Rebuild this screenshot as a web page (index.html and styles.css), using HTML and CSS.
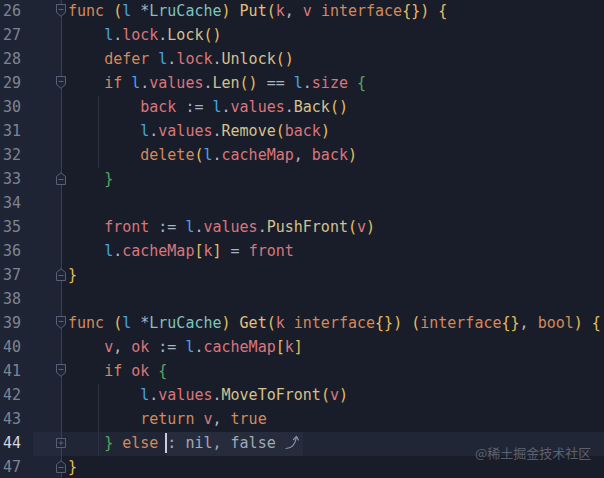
FILE: index.html
```html
<!DOCTYPE html>
<html>
<head>
<meta charset="utf-8">
<link rel="stylesheet" href="styles.css">
</head>
<body>
<div class="editor">
  <div class="row"><div class="gutter"><span class="ln">26</span><svg class="fold" viewBox="0 0 10 13"><path d="M0.5 0.5H9.5V8.5L5 12.3L0.5 8.5Z"/><line x1="2.5" y1="5.5" x2="7.5" y2="5.5"/></svg></div><div class="code"><span class="kw">func</span> <span class="by">(</span><span class="rc">l</span> <span class="op">*</span><span class="ty">LruCache</span><span class="by">)</span> <span class="fn">Put</span><span class="by">(</span><span class="pr">k</span><span class="pn">,</span> <span class="pr">v</span> <span class="kw">interface</span><span class="by">{}</span><span class="by">)</span> <span class="by">{</span></div></div>
  <div class="row"><div class="gutter"><span class="ln">27</span></div><div class="code">    <span class="rc">l</span><span class="pn">.</span><span class="fd">lock</span><span class="pn">.</span><span class="mc">Lock</span><span class="by">()</span></div></div>
  <div class="row"><div class="gutter"><span class="ln">28</span></div><div class="code">    <span class="kw">defer</span> <span class="rc">l</span><span class="pn">.</span><span class="fd">lock</span><span class="pn">.</span><span class="mc">Unlock</span><span class="by">()</span></div></div>
  <div class="row"><div class="gutter"><span class="ln">29</span><svg class="fold" viewBox="0 0 10 13"><path d="M0.5 0.5H9.5V8.5L5 12.3L0.5 8.5Z"/><line x1="2.5" y1="5.5" x2="7.5" y2="5.5"/></svg></div><div class="code">    <span class="kw">if</span> <span class="rc">l</span><span class="pn">.</span><span class="fd">values</span><span class="pn">.</span><span class="mc">Len</span><span class="by">()</span> <span class="op">==</span> <span class="rc">l</span><span class="pn">.</span><span class="fd">size</span> <span class="bg">{</span></div></div>
  <div class="row guide"><div class="gutter"><span class="ln">30</span></div><div class="code">        <span class="fd">back</span> <span class="op">:=</span> <span class="rc">l</span><span class="pn">.</span><span class="fd">values</span><span class="pn">.</span><span class="mc">Back</span><span class="by">()</span></div></div>
  <div class="row guide"><div class="gutter"><span class="ln">31</span></div><div class="code">        <span class="rc">l</span><span class="pn">.</span><span class="fd">values</span><span class="pn">.</span><span class="mc">Remove</span><span class="by">(</span><span class="fd">back</span><span class="by">)</span></div></div>
  <div class="row guide"><div class="gutter"><span class="ln">32</span></div><div class="code">        <span class="kw">delete</span><span class="by">(</span><span class="rc">l</span><span class="pn">.</span><span class="fd">cacheMap</span><span class="pn">,</span> <span class="fd">back</span><span class="by">)</span></div></div>
  <div class="row"><div class="gutter"><span class="ln">33</span><svg class="fold" viewBox="0 0 10 13"><path d="M0.5 12.5H9.5V4.5L5 0.7L0.5 4.5Z"/><line x1="2.5" y1="7.5" x2="7.5" y2="7.5"/></svg></div><div class="code">    <span class="bg">}</span></div></div>
  <div class="row"><div class="gutter"><span class="ln">34</span></div><div class="code"></div></div>
  <div class="row"><div class="gutter"><span class="ln">35</span></div><div class="code">    <span class="fd">front</span> <span class="op">:=</span> <span class="rc">l</span><span class="pn">.</span><span class="fd">values</span><span class="pn">.</span><span class="mc">PushFront</span><span class="by">(</span><span class="pr">v</span><span class="by">)</span></div></div>
  <div class="row"><div class="gutter"><span class="ln">36</span></div><div class="code">    <span class="rc">l</span><span class="pn">.</span><span class="fd">cacheMap</span><span class="by">[</span><span class="pr">k</span><span class="by">]</span> <span class="op">=</span> <span class="fd">front</span></div></div>
  <div class="row"><div class="gutter"><span class="ln">37</span><svg class="fold" viewBox="0 0 10 13"><path d="M0.5 12.5H9.5V4.5L5 0.7L0.5 4.5Z"/><line x1="2.5" y1="7.5" x2="7.5" y2="7.5"/></svg></div><div class="code"><span class="by">}</span></div></div>
  <div class="row"><div class="gutter"><span class="ln">38</span></div><div class="code"></div></div>
  <div class="row"><div class="gutter"><span class="ln">39</span><svg class="fold" viewBox="0 0 10 13"><path d="M0.5 0.5H9.5V8.5L5 12.3L0.5 8.5Z"/><line x1="2.5" y1="5.5" x2="7.5" y2="5.5"/></svg></div><div class="code"><span class="kw">func</span> <span class="by">(</span><span class="rc">l</span> <span class="op">*</span><span class="ty">LruCache</span><span class="by">)</span> <span class="fn">Get</span><span class="by">(</span><span class="pr">k</span> <span class="kw">interface</span><span class="by">{}</span><span class="by">)</span> <span class="by">(</span><span class="kw">interface</span><span class="by">{}</span><span class="pn">,</span> <span class="kw">bool</span><span class="by">)</span> <span class="by">{</span></div></div>
  <div class="row"><div class="gutter"><span class="ln">40</span></div><div class="code">    <span class="pr">v</span><span class="pn">,</span> <span class="fd">ok</span> <span class="op">:=</span> <span class="rc">l</span><span class="pn">.</span><span class="fd">cacheMap</span><span class="by">[</span><span class="pr">k</span><span class="by">]</span></div></div>
  <div class="row"><div class="gutter"><span class="ln">41</span><svg class="fold" viewBox="0 0 10 13"><path d="M0.5 0.5H9.5V8.5L5 12.3L0.5 8.5Z"/><line x1="2.5" y1="5.5" x2="7.5" y2="5.5"/></svg></div><div class="code">    <span class="kw">if</span> <span class="fd">ok</span> <span class="bg">{</span></div></div>
  <div class="row guide"><div class="gutter"><span class="ln">42</span></div><div class="code">        <span class="rc">l</span><span class="pn">.</span><span class="fd">values</span><span class="pn">.</span><span class="mc">MoveToFront</span><span class="by">(</span><span class="pr">v</span><span class="by">)</span></div></div>
  <div class="row guide"><div class="gutter"><span class="ln">43</span></div><div class="code">        <span class="kw">return</span> <span class="pr">v</span><span class="pn">,</span> <span class="kw">true</span></div></div>
  <div class="row current"><div class="gutter"><span class="ln">44</span><svg class="fold sq" viewBox="0 0 10 10"><path d="M0.5 0.5H9.5V9.5H0.5Z"/><line x1="2.5" y1="5" x2="7.5" y2="5"/><line x1="5" y1="2.5" x2="5" y2="7.5"/></svg></div><div class="code">    <span class="bg">}</span> <span class="kw">else</span> <span class="caret"></span><span class="placeholder">: nil, false <svg class="arrow" viewBox="0 0 14 16"><path d="M1 14.5C6 14.5 10 12 11.5 3"/><path d="M8.5 5.5L11.5 2.5L13.5 6"/></svg></span></div></div>
  <div class="row"><div class="gutter"><span class="ln">47</span><svg class="fold" viewBox="0 0 10 13"><path d="M0.5 12.5H9.5V4.5L5 0.7L0.5 4.5Z"/><line x1="2.5" y1="7.5" x2="7.5" y2="7.5"/></svg></div><div class="code"><span class="by">}</span></div></div>
  <div class="watermark">@稀土掘金技术社区</div>
</div>
</body>
</html>
```

FILE: styles.css
```css
html, body {
  margin: 0;
  padding: 0;
  background: #191d2a;
}
.editor {
  position: relative;
  width: 604px;
  height: 478px;
  overflow: hidden;
  background: #191d2a;
  font-family: "DejaVu Sans Mono", "Liberation Mono", monospace;
  font-size: 15px;
  color: #b4bccb;
}
.row {
  display: flex;
  height: 24px;
  line-height: 23px;
}
.gutter {
  position: relative;
  flex: 0 0 61px;
  width: 61px;
  background: #1e2434;
  border-right: 1px solid #35405c;
  box-sizing: content-box;
}
.ln {
  display: block;
  padding-left: 3px;
  color: #7d8494;
}
.code {
  flex: 1;
  padding-left: 6px;
  white-space: pre;
}
.fold {
  position: absolute;
  right: -5px;
  top: 4px;
  width: 10px;
  height: 13px;
  fill: #1e2434;
  stroke: #56617c;
  stroke-width: 1;
}
.fold.sq {
  top: 6px;
  height: 10px;
}
.guide .code {
  background: linear-gradient(#2c3244, #2c3244) no-repeat 36px 0 / 1px 100%;
}
.current .gutter {
  background: linear-gradient(to right, #1e2434 33px, #242a3b 33px);
}
.current .ln {
  color: #d3d7df;
}
.current .code {
  background: linear-gradient(#2c3244, #2c3244) no-repeat 36px 0 / 1px 100%, #212636;
}
.caret {
  display: inline-block;
  width: 2px;
  height: 20px;
  margin-left: -2px;
  vertical-align: -5px;
  background: #c9cdd6;
}
.placeholder {
  display: inline-block;
  height: 24px;
  padding-right: 4px;
  background: #262c3c;
  color: #a2a9b6;
}
.arrow {
  width: 14px;
  height: 16px;
  vertical-align: -2px;
  fill: none;
  stroke: #8c95a8;
  stroke-width: 1.2;
  stroke-linecap: round;
  stroke-linejoin: round;
}
.kw { color: #d4895c; }
.by { color: #e6bf5f; }
.bg { color: #5aa660; }
.rc { color: #4aa3e4; }
.ty { color: #7fc3bd; }
.op { color: #aab2c3; }
.pn { color: #b4bccb; }
.fn { color: #e3c07c; }
.mc { color: #d4c18f; }
.pr { color: #d87a7e; }
.fd { color: #d9767c; }
.watermark {
  position: absolute;
  left: 475px;
  top: 444px;
  font-family: "Noto Sans CJK SC", sans-serif;
  font-size: 13px;
  line-height: 18px;
  color: rgba(170, 175, 190, 0.45);
  white-space: nowrap;
}
```
